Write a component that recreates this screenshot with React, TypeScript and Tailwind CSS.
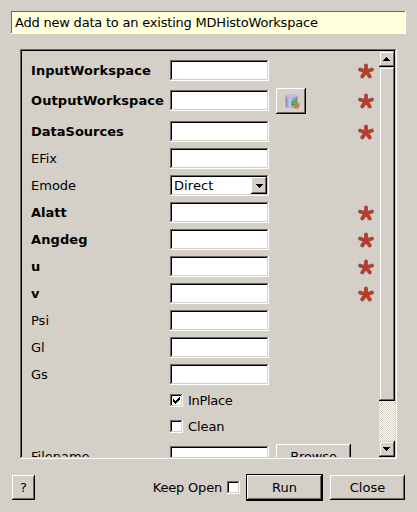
import React from "react";

const sunken =
  "shadow-[inset_-1px_-1px_#ffffff,inset_1px_1px_#6a6864,inset_-2px_-2px_#d4d0c8,inset_2px_2px_#000000]";
const raised =
  "shadow-[inset_-1px_-1px_#000000,inset_1px_1px_#ffffff,inset_-2px_-2px_#6a6864]";
const barButton =
  "shadow-[inset_-1px_-1px_#000000,inset_1px_1px_#d4d0c8,inset_-2px_-2px_#6a6864,inset_2px_2px_#ffffff]";

function Field() {
  return <div className={`h-[21px] w-[99px] shrink-0 bg-white ${sunken}`} />;
}

function Star() {
  return (
    <svg className="h-[18px] w-[18px] shrink-0" viewBox="0 0 18 18">
      <g fill="none" strokeLinecap="round">
        <path d="M9 9.3V3.4M9 9.3L3 7.6M9 9.3L15 7.6M9 9.3L5.2 14.5M9 9.3L12.8 14.5" stroke="#86695f" strokeWidth="4" />
        <path d="M9 9.3V3.4M9 9.3L3 7.6M9 9.3L15 7.6M9 9.3L5.2 14.5M9 9.3L12.8 14.5" stroke="#c03826" strokeWidth="2.8" />
      </g>
    </svg>
  );
}

function Check({ checked = false }: { checked?: boolean }) {
  return (
    <div className={`flex h-[13px] w-[13px] shrink-0 items-center justify-center bg-white ${sunken}`}>
      {checked && (
        <svg className="h-[7px] w-[7px]" viewBox="0 0 7 7" shapeRendering="crispEdges">
          <path d="M0 2h1v1h1v1h1v-1h1v-1h1v-1h1v-1h1v3h-1v1h-1v1h-1v1h-1v1h-1v-1h-1v-1h-1z" />
        </svg>
      )}
    </div>
  );
}

function Triangle({ down = false }: { down?: boolean }) {
  return (
    <svg className={`h-1 w-[7px] ${down ? "rotate-180" : ""}`} viewBox="0 0 7 4" shapeRendering="crispEdges">
      <path d="M3 0h1v1h1v1h1v1h1v1H0V3h1V2h1V1h1z" />
    </svg>
  );
}

function DatabaseIcon() {
  return (
    <svg className="ml-1 h-4 w-4" viewBox="0 0 16 16">
      <defs>
        <linearGradient id="drum" x1="0" x2="1">
          <stop offset="0" stopColor="#8385ba" />
          <stop offset="0.35" stopColor="#c4c6ee" />
          <stop offset="0.7" stopColor="#9c9ed0" />
          <stop offset="1" stopColor="#7c7eb0" />
        </linearGradient>
      </defs>
      <path d="M.5 2.8v10.4c0 2.6 12 2.6 12 0V2.8z" fill="url(#drum)" />
      <ellipse cx="6.5" cy="2.8" rx="6" ry="1.9" fill="#b9bbdf" />
      <path d="M14.6 9.5l-.2 4.3-1.9 1.7H9.8L9 13.6l2.6-.6 1.4-2.7z" fill="#ee6940" />
      <path d="M6.5 13V8.5L7.7 7.6h3.2l1.1 1.2v2.4l-1 .9H9.1V13z" fill="#38b13a" />
      <path d="M8.7 9.2h1.5v1.5H8.7z" fill="#8fdf88" />
    </svg>
  );
}

type RowProps = {
  label?: React.ReactNode;
  bold?: boolean;
  height?: string;
  children?: React.ReactNode;
};

function Row({ label, bold, height = "h-[21px]", children }: RowProps) {
  return (
    <div className={`flex shrink-0 items-center ${height}`}>
      <div className={`w-[139px] shrink-0 whitespace-nowrap ${bold ? "font-bold" : ""}`}>{label}</div>
      <div className="flex flex-1 items-center gap-[7px]">{children ?? <Field />}</div>
      {bold && <Star />}
    </div>
  );
}

export default function App() {
  return (
    <div className="flex h-[512px] w-[417px] flex-col overflow-hidden bg-[#d4d0c8] pt-[11px] font-['DejaVu_Sans',sans-serif] text-[13px] leading-[15px] text-black">
      <div className="mx-[11px] flex h-[23px] items-center bg-[#ffffdc] pl-1 tracking-[-0.21px] whitespace-nowrap shadow-[inset_-1px_-1px_#ffffff,inset_1px_1px_#6a6864]">
        Add new data to an existing MDHistoWorkspace
      </div>

      <div className={`mt-[15px] ml-5 flex h-[410px] w-[377px] shrink-0 p-0.5 ${sunken}`}>
        <div className="flex min-w-0 flex-1 flex-col gap-1.5 overflow-hidden pt-[9px] pr-1 pl-[9px]">
          <Row label={<span className="tracking-[0.05px]">InputWorkspace</span>} bold />
          <Row label={<span className="tracking-[0.1px]">OutputWorkspace</span>} bold height="h-[27px] mb-px">
            <Field />
            <div className={`flex h-[26px] w-[30px] items-center justify-center ${raised}`}>
              <DatabaseIcon />
            </div>
          </Row>
          <Row label="DataSources" bold />
          <Row label="EFix" />
          <Row label="Emode">
            <div className={`flex h-[21px] w-[99px] items-center justify-between bg-white p-0.5 pl-1 ${sunken}`}>
              <span className="tracking-[0.1px]">Direct</span>
              <div className={`flex h-[17px] w-4 items-center justify-center bg-[#d4d0c8] ${raised}`}>
                <Triangle down />
              </div>
            </div>
          </Row>
          <Row label="Alatt" bold />
          <Row label={<span className="tracking-[0.1px]">Angdeg</span>} bold />
          <Row label="u" bold />
          <Row label="v" bold />
          <Row label="Psi" />
          <Row label="Gl" />
          <Row label="Gs" />
          <Row height="h-[19px] mb-px">
            <Check checked />
            <span className="-ml-0.5 tracking-[-0.3px]">InPlace</span>
          </Row>
          <Row height="h-[19px] mb-px">
            <Check />
            <span className="-ml-0.5 tracking-[-0.1px]">Clean</span>
          </Row>
          <Row label="Filename" height="h-[27px] mb-px">
            <Field />
            <div className={`flex h-[26px] w-[75px] items-center justify-center tracking-[-0.1px] ${raised}`}>
              Browse
            </div>
          </Row>
        </div>

        <div className="flex w-4 shrink-0 flex-col bg-[repeating-conic-gradient(#ffffff_0_25%,#d4d0c8_0_50%)] bg-[length:2px_2px]">
          <div className={`flex h-4 shrink-0 items-center justify-center bg-[#d4d0c8] pr-px ${barButton}`}>
            <Triangle />
          </div>
          <div className={`h-[334px] shrink-0 bg-[#d4d0c8] ${barButton}`} />
          <div className={`mt-auto flex h-4 shrink-0 items-center justify-center bg-[#d4d0c8] pr-px ${barButton}`}>
            <Triangle down />
          </div>
        </div>
      </div>

      <div className="mt-[15px] flex h-[27px] shrink-0 items-center px-3">
        <div className={`flex h-[25px] w-[23px] items-center justify-center ${raised}`}>?</div>
        <span className="ml-auto tracking-[-0.2px]">Keep Open</span>
        <div className="ml-[5px]">
          <Check />
        </div>
        <div className="ml-1.5 h-[27px] w-[77px] bg-black p-px">
          <div className={`flex h-full items-center justify-center bg-[#d4d0c8] ${raised}`}>Run</div>
        </div>
        <div className={`ml-[7px] flex h-[25px] w-[75px] items-center justify-center ${raised}`}>Close</div>
      </div>
    </div>
  );
}
